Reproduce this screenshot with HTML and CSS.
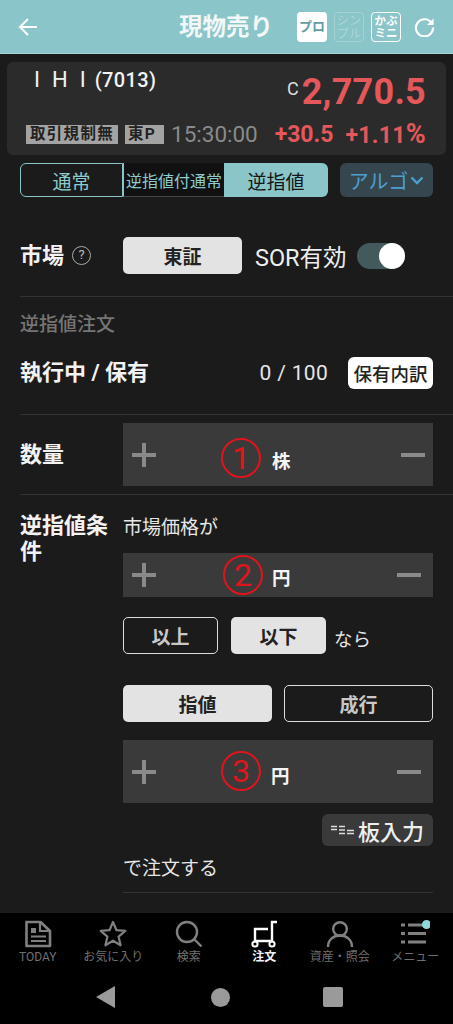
FILE: index.html
```html
<!DOCTYPE html>
<html lang="ja">
<head>
<meta charset="utf-8">
<title>現物売り</title>
<link rel="stylesheet" href="styles.css">
</head>
<body>
<div class="app">
  <header class="appbar">
    <svg class="back" viewBox="0 0 20 20" width="20" height="20"><path d="M19 10H2M10 2l-8 8 8 8" fill="none" stroke="#fff" stroke-width="2"/></svg>
    <h1 class="title">現物売り</h1>
    <div class="modes">
      <span class="mode mode-pro">プロ</span>
      <span class="mode mode-simple">シン<br>プル</span>
      <span class="mode mode-mini">かぶ<br>ミニ</span>
    </div>
    <svg class="refresh" viewBox="0 0 22 22" width="21" height="21"><path d="M18.600 7.500A9 9 0 1 0 20 12" fill="none" stroke="#fff" stroke-width="2.200"/><path d="M20.500 2.500v7h-7z" fill="#fff"/></svg>
  </header>

  <section class="quote">
    <div class="quote-top">
      <div class="stock"><span class="stock-name">IHI</span><span class="stock-code">(7013)</span></div>
      <div class="price-wrap"><span class="price-flag">C</span><span class="price">2,770.5</span></div>
    </div>
    <div class="quote-bottom">
      <span class="tag">取引規制無</span>
      <span class="tag tag-market">東P</span>
      <span class="time">15:30:00</span>
      <span class="change change-abs">+30.5</span>
      <span class="change change-pct">+1.11<span class="pct">%</span></span>
    </div>
  </section>

  <nav class="tabs">
    <div class="segments">
      <span class="segment segment-normal">通常</span>
      <span class="segment segment-mid">逆指値付通常</span>
      <span class="segment segment-on">逆指値</span>
    </div>
    <span class="algo">アルゴ<svg viewBox="0 0 14 9" width="14" height="9"><path d="M1.500 1.500L7 7l5.500-5.500" fill="none" stroke="#4d9fcf" stroke-width="2.400"/></svg></span>
  </nav>

  <main class="form">
    <div class="row row-market">
      <div class="label-help"><span class="label">市場</span><span class="help">?</span></div>
      <div class="market-controls">
        <span class="btn btn-on btn-market">東証</span>
        <span class="sor">SOR有効</span>
        <span class="toggle"><span class="knob"></span></span>
      </div>
    </div>

    <div class="section-head">逆指値注文</div>
    <div class="row-holdings">
      <span class="label">執行中 / 保有</span>
      <span class="holdings-value">0 / 100</span>
      <span class="holdings-btn">保有内訳</span>
    </div>

    <div class="row row-qty">
      <span class="label">数量</span>
      <div class="stepper stepper-qty">
        <svg class="plus" viewBox="0 0 26 26" width="26" height="26"><path d="M13 1v24M1 13h24" stroke="#8a8a8a" stroke-width="4"/></svg>
        <div class="stepper-value stepper-value-qty"><span class="mark">1</span><span class="unit">株</span></div>
        <span class="minus"></span>
      </div>
    </div>

    <div class="row row-cond">
      <span class="label label-cond">逆指値条件</span>
      <div class="cond">
        <div class="cond-intro">市場価格が</div>
        <div class="stepper stepper-low">
          <svg class="plus" viewBox="0 0 26 26" width="26" height="26"><path d="M13 1v24M1 13h24" stroke="#8a8a8a" stroke-width="4"/></svg>
          <div class="stepper-value stepper-value-low"><span class="mark">2</span><span class="unit">円</span></div>
          <span class="minus"></span>
        </div>
        <div class="choice">
          <span class="btn btn-off btn-small">以上</span>
          <span class="btn btn-on btn-small">以下</span>
          <span class="nara">なら</span>
        </div>
        <div class="choice-wide">
          <span class="btn btn-on">指値</span>
          <span class="btn btn-off">成行</span>
        </div>
        <div class="stepper stepper-price">
          <svg class="plus" viewBox="0 0 26 26" width="26" height="26"><path d="M13 1v24M1 13h24" stroke="#8a8a8a" stroke-width="4"/></svg>
          <div class="stepper-value stepper-value-price"><span class="mark">3</span><span class="unit">円</span></div>
          <span class="minus"></span>
        </div>
        <div class="board-wrap">
          <span class="board">
            <svg viewBox="0 0 24 12" width="24" height="12"><path d="M0 2.500h6M0 5.500h6M8 2.500h6M8 6h6M8 9.500h6M16 6.500h7M16 9.500h7" stroke="#ddd" stroke-width="1.600"/></svg>板入力
          </span>
        </div>
        <div class="cond-end">で注文する</div>
      </div>
    </div>
  </main>

  <footer class="tabbar">
    <div class="tab">
      <svg viewBox="0 0 28 28" width="28" height="28"><path d="M2.500 2h14L26 11v15H2.500z" fill="none" stroke="#808080" stroke-width="2.600" stroke-linejoin="round"/><path d="M16 2.500V11h9.500" fill="none" stroke="#808080" stroke-width="2.200"/><path d="M7 8h5v5H7z" fill="#808080"/><path d="M7 16.500h15M7 21h15" stroke="#808080" stroke-width="2.200"/></svg>
      <span>TODAY</span>
    </div>
    <div class="tab">
      <svg viewBox="0 0 28 28" width="28" height="28"><path d="M14 2l3.500 8.200 8.800.7-6.700 5.800 2 8.600L14 20.700l-7.600 4.600 2-8.600-6.700-5.800 8.800-.7z" fill="none" stroke="#808080" stroke-width="2.200" stroke-linejoin="round"/></svg>
      <span>お気に入り</span>
    </div>
    <div class="tab">
      <svg viewBox="0 0 28 28" width="28" height="28"><circle cx="12" cy="12" r="10" fill="none" stroke="#808080" stroke-width="2.400"/><path d="M19 19l7.500 7.500" stroke="#808080" stroke-width="2.400"/></svg>
      <span>検索</span>
    </div>
    <div class="tab tab-on">
      <svg viewBox="0 0 28 28" width="28" height="28"><path d="M27 2h-5v19H5V9h13" fill="none" stroke="#fff" stroke-width="2.400"/><circle cx="5" cy="24" r="2.600" fill="none" stroke="#fff" stroke-width="2"/><circle cx="22" cy="24" r="2.600" fill="none" stroke="#fff" stroke-width="2"/></svg>
      <span>注文</span>
    </div>
    <div class="tab">
      <svg viewBox="0 0 28 28" width="28" height="28"><circle cx="14" cy="9" r="6.800" fill="none" stroke="#808080" stroke-width="2.400"/><path d="M2 27c0-7 5-11.500 12-11.500S26 20 26 27" fill="none" stroke="#808080" stroke-width="2.400"/></svg>
      <span>資産・照会</span>
    </div>
    <div class="tab">
      <svg viewBox="0 0 30 28" width="30" height="28"><path d="M1 5h4M1 13.500h4M1 22h4M8 5h18M8 13.500h18M8 22h18" stroke="#808080" stroke-width="2.800"/><circle cx="26.500" cy="4.500" r="4.500" fill="#8fd8dc"/></svg>
      <span>メニュー</span>
    </div>
  </footer>

  <div class="sysnav">
    <svg viewBox="0 0 20 22" width="20" height="22"><path d="M19 0v22L0 11z" fill="#9a9a9a"/></svg>
    <span class="sys-circle"></span>
    <span class="sys-square"></span>
  </div>
</div>
</body>
</html>
```

FILE: styles.css
```css
* { box-sizing: border-box; }
html, body { margin: 0; padding: 0; background: #1b1b1b; }
body { font-family: Roboto, "Noto Sans CJK JP", "Liberation Sans", sans-serif; color: #eee; }
.app { width: 453px; height: 1024px; display: flex; flex-direction: column; overflow: hidden; }

.appbar { height: 54px; flex: none; display: flex; align-items: center; background: #8ac5c9; border-bottom: 1px solid #a5d3d6; padding: 0 19px 0 18px; }
.back { flex: none; }
.title { margin: 0 0 0 141px; width: 93px; font-size: 23.500px; line-height: 30px; font-weight: 700; color: #f2f7f7; white-space: nowrap; }
.modes { display: flex; gap: 7px; margin-left: 25px; }
.mode { width: 30px; height: 30px; border-radius: 4px; display: flex; align-items: center; justify-content: center; text-align: center; font-size: 11.500px; line-height: 12px; font-weight: 700; }
.mode-pro { background: #fff; color: #5e9ea3; font-size: 13px; }
.mode-simple { border: 1.500px solid #a6d2d5; color: #aad5d8; font-weight: 400; font-size: 12.500px; line-height: 13px; }
.mode-mini { border: 1.500px solid #fff; color: #fff; }
.refresh { margin-left: 13px; flex: none; }

.quote { flex: none; height: 93px; margin: 8px 7px 0; background: #2b2b2b; border-radius: 6px; padding: 0 20px 0 19px; }
.quote-top { height: 58px; display: flex; justify-content: space-between; }
.stock { padding-top: 1px; line-height: 34px; white-space: nowrap; }
.stock-name { font-size: 22px; color: #f2f2f2; letter-spacing: 12px; margin-left: 8px; margin-right: -3px; }
.stock-code { font-size: 20px; font-weight: 500; color: #f2f2f2; letter-spacing: .4px; }
.price-wrap { display: flex; align-items: baseline; padding-top: 5px; }
.price-flag { font-size: 18px; color: #ddd; margin-right: 3px; position: relative; top: -9px; }
.price { font-size: 36px; line-height: 50px; font-weight: 700; color: #e4575a; white-space: nowrap; letter-spacing: .25px; }
.quote-bottom { display: flex; align-items: center; height: 26px; margin-top: 1px; }
.tag { height: 19px; background: #a3a3a3; color: #222; font-size: 15.500px; line-height: 19px; font-weight: 700; padding: 0 4px; letter-spacing: 1.300px; white-space: nowrap; margin-right: 7px; width: 92px; overflow: hidden; }
.tag-market { width: 39px; padding: 0 0 0 3px; }
.time { font-size: 22.500px; color: #8a8a8a; white-space: nowrap; }
.change { font-weight: 700; color: #e4575a; white-space: nowrap; }
.change-abs { margin-left: auto; font-size: 23px; }
.change-pct { margin-left: 12px; font-size: 23px; letter-spacing: .3px; }
.pct { font-size: 27px; }

.tabs { flex: none; height: 34px; margin-top: 8px; padding: 0 20px; display: flex; justify-content: space-between; }
.segments { display: flex; }
.segment { height: 34px; display: flex; align-items: center; justify-content: center; white-space: nowrap; color: #8ccbd0; font-size: 19px; }
.segment-normal { width: 103px; border: 1.500px solid #8ac5c9; border-radius: 6px 0 0 6px; }
.segment-mid { width: 101px; font-size: 16px; color: #8ccbd0; border-left: 1px solid #8ac5c9; border-bottom: 1px solid #444; background: #111; }
.segment-on { width: 104px; background: #8ac5c9; color: #151515; border-radius: 0 6px 6px 0; }
.algo { width: 93px; height: 34px; background: #36464e; border-radius: 6px; display: flex; align-items: center; justify-content: center; gap: 2px; color: #4d9fcf; font-size: 20px; white-space: nowrap; }

.form { flex: 1; min-height: 0; }
.label { font-size: 22px; line-height: 26px; font-weight: 700; color: #f2f2f2; white-space: nowrap; }
.row { margin-left: 20px; border-bottom: 1px solid #333; display: grid; grid-template-columns: 103px 310px; }
.row-market { margin-top: 40px; padding-bottom: 22px; align-items: center; }
.label-help { display: flex; align-items: center; gap: 8px; }
.help { width: 19px; height: 19px; border: 1.500px solid #aaa; border-radius: 50%; font-size: 13px; line-height: 16px; text-align: center; color: #bbb; }
.market-controls { display: flex; align-items: center; }
.btn { height: 37px; border-radius: 5px; display: flex; align-items: center; justify-content: center; font-size: 19px; font-weight: 700; white-space: nowrap; }
.btn-on { background: #e3e3e3; color: #222; }
.btn-off { border: 1.500px solid #ddd; color: #c8c8c8; }
.btn-market { width: 119px; }
.sor { margin-left: 13px; font-size: 23.500px; color: #eee; white-space: nowrap; }
.toggle { margin-left: 10px; width: 48px; height: 26px; border-radius: 13px; background: #435a5c; position: relative; }
.knob { position: absolute; right: 0; top: 0; width: 26px; height: 26px; border-radius: 50%; background: #fff; }

.section-head { margin: 14px 0 0 20px; font-size: 19px; line-height: 27px; font-weight: 500; color: #757575; }
.row-holdings { margin: 19px 0 0 20px; padding: 0 20px 25px 0; border-bottom: 1px solid #333; display: flex; align-items: center; }
.holdings-value { margin-left: auto; font-size: 21px; color: #e6e6e6; white-space: nowrap; letter-spacing: .3px; }
.holdings-btn { margin-left: 20px; width: 85px; height: 32px; background: #fff; color: #222; border-radius: 6px; display: flex; align-items: center; justify-content: center; font-size: 18.500px; font-weight: 500; white-space: nowrap; }

.row-qty { padding: 8px 0; align-items: center; }
.stepper { height: 63px; background: #3a3a3a; display: flex; align-items: center; padding: 0 8px; }
.stepper-low { height: 44px; padding-right: 12px; }
.stepper-price { padding-right: 12px; margin-top: 18px; }
.plus { flex: none; }
.minus { width: 24px; height: 4px; background: #8a8a8a; flex: none; }
.stepper-value { display: flex; align-items: center; gap: 11px; margin: 0 auto 0 64px; position: relative; }
.stepper-value-qty { top: 3px; }
.stepper-value-low { margin-left: 66px; gap: 9px; }
.stepper-value-price { top: -1px; gap: 10px; }
.mark { width: 40px; height: 40px; border: 2px solid #e0141c; border-radius: 50%; color: #e0141c; font-size: 32px; line-height: 36px; text-align: center; font-weight: 400; }
.unit { font-size: 18.500px; font-weight: 700; color: #f5f5f5; margin-top: 4px; }
.stepper-value-price .unit { margin-top: 8px; }

.row-cond { padding-top: 18px; border-bottom: 0; }
.label-cond { white-space: normal; width: 90px; }
.cond { display: flex; flex-direction: column; }
.cond-intro { font-size: 19px; line-height: 26px; color: #e6e6e6; margin-top: 2px; margin-bottom: 12px; }
.choice { display: flex; align-items: center; margin-top: 20px; gap: 13px; }
.btn-small { width: 95px; }
.nara { font-size: 18.500px; color: #e6e6e6; margin: 4px 0 0 -5px; }
.choice-wide { display: grid; grid-template-columns: 149px 149px; gap: 12px; margin-top: 31px; }
.board-wrap { display: flex; justify-content: flex-end; margin-top: 11px; }
.board { width: 111px; height: 32px; background: #3a3a3a; border-radius: 6px; display: flex; align-items: center; justify-content: center; gap: 3px; font-size: 22px; font-weight: 500; color: #eee; white-space: nowrap; }
.cond-end { margin-top: 10px; padding-bottom: 10px; font-size: 19px; line-height: 26px; color: #e6e6e6; border-bottom: 1px solid #333; }

.tabbar { flex: none; height: 59px; background: #000; display: grid; grid-template-columns: repeat(6, 75.500px); padding-top: 7px; }
.tab { display: flex; flex-direction: column; align-items: center; color: #707070; font-size: 12px; line-height: 14px; white-space: nowrap; }
.tab svg { display: block; margin-bottom: 2px; }
.tab-on { color: #f2f2f2; font-weight: 700; }

.sysnav { flex: none; height: 52px; background: #000; display: flex; align-items: center; padding: 0 0 2px 96px; }
.sys-circle { width: 19px; height: 19px; border-radius: 50%; background: #9a9a9a; margin-left: 95px; }
.sys-square { width: 20px; height: 20px; border-radius: 2px; background: #9a9a9a; margin-left: 93px; }
```
